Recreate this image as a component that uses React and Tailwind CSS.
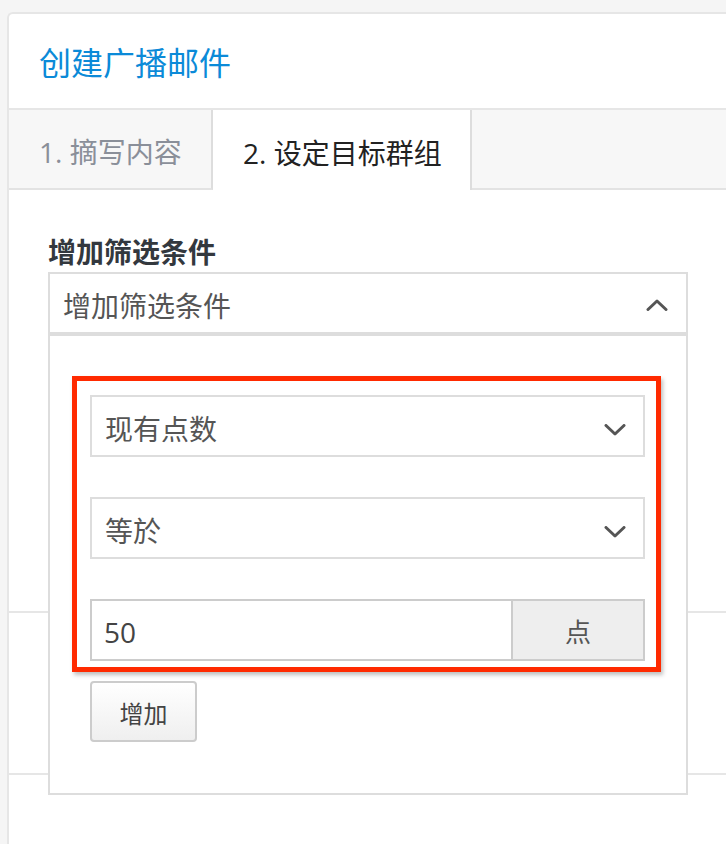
import { useState } from 'react'

const font = "font-['Open_Sans','Noto_Sans_CJK_SC',sans-serif]"

const Chevron = ({ up = false }) => (
  <svg width="22" height="12" viewBox="0 0 22 12" fill="none" className="shrink-0">
    <path
      d={up ? 'M2 10.5 L11 2 L20 10.5' : 'M2 1.5 L11 10 L20 1.5'}
      stroke="#555"
      strokeWidth="3"
      strokeLinecap="round"
      strokeLinejoin="round"
    />
  </svg>
)

const SelectBox = ({ label }) => (
  <div className="flex h-[62px] items-center justify-between border-2 border-[#dddddd] bg-white pl-[13px] pr-[17px]">
    <span className="pt-[6px] text-[28px] leading-[40px] text-[#555]">{label}</span>
    <div className="pt-[8px]">
      <Chevron />
    </div>
  </div>
)

export default function App() {
  const [tab, setTab] = useState(2)

  const tabs = [
    { id: 1, label: '1. 摘写内容', width: 'w-[204px]' },
    { id: 2, label: '2. 设定目标群组', width: 'w-[259px]' },
  ]

  return (
    <div className={`h-[844px] w-[726px] overflow-hidden bg-[#f5f5f5] pl-[7px] pt-[12px] ${font}`}>
      <div className="h-[900px] w-[760px] rounded-tl-[6px] border-l-2 border-t-2 border-[#e6e6e6] bg-white">
        {/* header */}
        <div className="flex h-[96px] items-center border-b-2 border-[#e6e6e6] pl-[30px]">
          <h1 className="pt-[4px] text-[32px] font-normal leading-[40px] text-[#0b8ad8]">创建广播邮件</h1>
        </div>

        {/* tabs */}
        <div className="flex h-[80px]">
          {tabs.map((t) => (
            <button
              key={t.id}
              onClick={() => setTab(t.id)}
              className={`flex h-[80px] items-center border-r-2 border-[#dddddd] pl-[30px] pt-[6px] text-left text-[28px] leading-[40px] ${t.width} ${
                tab === t.id
                  ? 'bg-white text-[#222]'
                  : 'border-b-2 border-b-[#e3e3e3] bg-[#f7f7f7] text-[#8a8f99]'
              }`}
            >
              {t.label}
            </button>
          ))}
          <div className="flex-1 border-b-2 border-[#e3e3e3] bg-[#f7f7f7]" />
        </div>

        {/* filter section */}
        <div className="h-[423px] border-b-2 border-[#e6e6e6] pl-[39px] pt-[42px]">
          <label className="block text-[28px] font-bold leading-[40px] text-[#33383e]">增加筛选条件</label>
          <div className="relative z-10 w-[640px]">
            <div className="flex h-[62px] items-center justify-between border-2 border-[#dddddd] bg-white pl-[13px] pr-[18px]">
              <span className="pt-[6px] text-[28px] leading-[40px] text-[#555]">增加筛选条件</span>
              <div className="pt-[4px]">
                <Chevron up />
              </div>
            </div>

            {/* dropdown panel */}
            <div className="absolute left-0 top-full h-[461px] w-[640px] border-2 border-[#dddddd] bg-white pl-[22px] pt-[40px]">
              <div className="w-[589px] border-[5px] border-[#ff2a00] pb-[6px] pl-[13px] pr-[11px] pt-[14px] shadow-[2px_3px_4px_rgba(0,0,0,0.25)]">
                <div className="flex flex-col gap-[40px]">
                  <SelectBox label="现有点数" />
                  <SelectBox label="等於" />
                  <div className="flex h-[62px]">
                    <div className="flex flex-1 items-center border-2 border-r-0 border-[#cccccc] bg-white pl-[12px]">
                      <span className="pt-[4px] text-[28px] leading-[40px] text-[#444]">50</span>
                    </div>
                    <div className="flex w-[134px] items-center justify-center border-2 border-[#cccccc] bg-[#eeeeee]">
                      <span className="pt-[4px] text-[26px] leading-[40px] text-[#555]">点</span>
                    </div>
                  </div>
                </div>
              </div>
              <button className="mt-[9px] ml-[18px] flex h-[61px] w-[107px] items-center justify-center rounded-[4px] border-2 border-[#cccccc] bg-gradient-to-b from-white to-[#efefef] pt-[4px] text-[24px] leading-[36px] text-[#444]">
                增加
              </button>
            </div>
          </div>
        </div>

        {/* underlying rows */}
        <div className="h-[162px] border-b-2 border-[#e6e6e6]" />
        <div className="h-[100px]" />
      </div>
    </div>
  )
}
